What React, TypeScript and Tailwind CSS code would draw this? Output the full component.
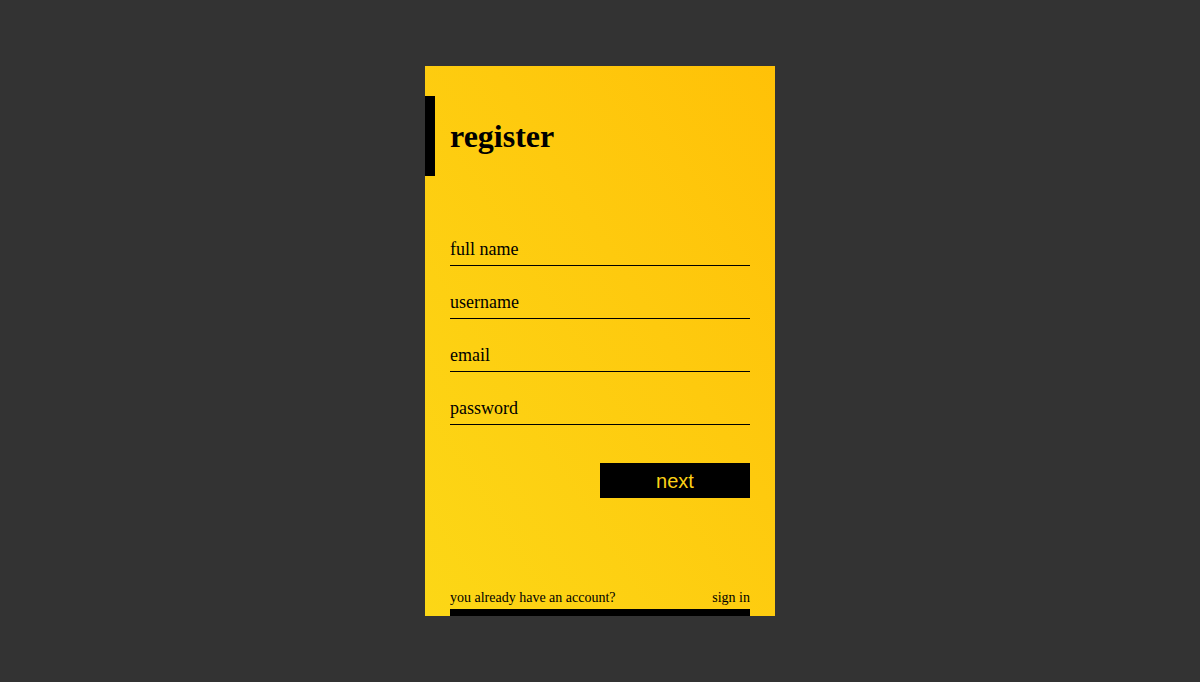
import React from "react";

export default function App() {
  const fields = ["full name", "username", "email", "password"];
  return (
    <div className="min-h-screen h-screen w-full bg-[#333333] flex items-center justify-center">
      <div
        className="w-[350px] h-[550px] flex flex-col overflow-hidden bg-linear-to-tr from-[#fcd716] to-[#ffc107] pt-[30px]"
        style={{ fontFamily: '"Liberation Serif", "Times New Roman", serif' }}
      >
        <div className="flex items-center h-[80px]">
          <div className="w-[10px] h-[80px] bg-black" />
          <h1 className="ml-[15px] text-[32px] font-bold text-black leading-normal">register</h1>
        </div>
        <div className="px-[25px] mt-[56px] flex flex-col gap-[19px]">
          {fields.map((f) => (
            <input
              key={f}
              type={f === "password" ? "password" : "text"}
              placeholder={f}
              className="block w-full h-[34px] bg-transparent border-0 border-b border-black text-[18px] text-black placeholder:text-black outline-none px-0 pb-0 pt-[2px]"
              style={{ fontFamily: '"Liberation Serif", "Times New Roman", serif' }}
            />
          ))}
        </div>
        <div className="px-[25px] mt-[38px] flex justify-end">
          <button
            className="w-[150px] h-[35px] bg-black text-[#fcd116] text-[20px] leading-none"
            style={{ fontFamily: '"Liberation Sans", Arial, sans-serif' }}
          >
            next
          </button>
        </div>
        <div className="mt-auto px-[25px]">
          <div className="flex justify-between text-[14px] leading-[16px] text-black">
            <span>you already have an account?</span>
            <span>sign in</span>
          </div>
          <div className="mt-[3px] h-[7px] bg-black" />
        </div>
      </div>
    </div>
  );
}
